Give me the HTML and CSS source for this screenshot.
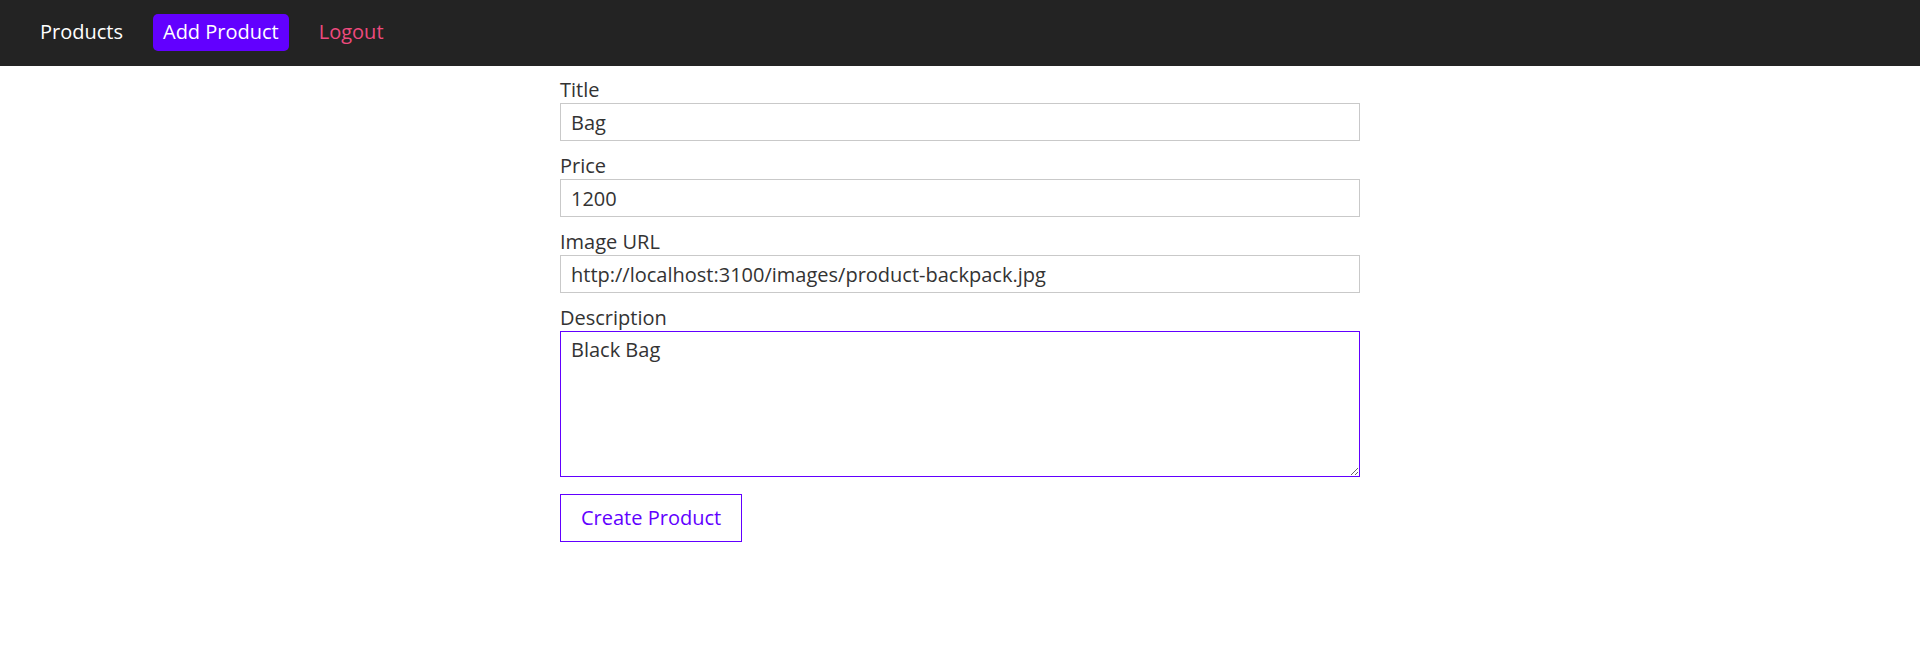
FILE: index.html
```
<!DOCTYPE html>
<html lang="en">
<head>
<meta charset="utf-8">
<title>Add Product</title>
<link rel="stylesheet" href="styles.css">
</head>
<body>
<header class="main-header">
  <nav class="main-nav">
    <ul class="nav-list">
      <li class="nav-item"><a class="nav-link" href="#">Products</a></li>
      <li class="nav-item"><a class="nav-link nav-link--active" href="#">Add Product</a></li>
      <li class="nav-item"><a class="nav-link nav-link--logout" href="#">Logout</a></li>
    </ul>
  </nav>
</header>
<main class="content">
  <form class="product-form">
    <div class="form-control">
      <label class="form-label" for="title">Title</label>
      <input class="form-input" type="text" id="title" value="Bag">
    </div>
    <div class="form-control">
      <label class="form-label" for="price">Price</label>
      <input class="form-input" type="text" id="price" value="1200">
    </div>
    <div class="form-control">
      <label class="form-label" for="imageUrl">Image URL</label>
      <input class="form-input" type="text" id="imageUrl" value="http://localhost:3100/images/product-backpack.jpg">
    </div>
    <div class="form-control">
      <label class="form-label" for="description">Description</label>
      <textarea class="form-input form-textarea form-textarea--focused" id="description">Black Bag</textarea>
    </div>
    <button class="btn" type="button">Create Product</button>
  </form>
</main>
</body>
</html>
```
FILE: styles.css
```
* {
  box-sizing: border-box;
}

html, body {
  margin: 0;
  padding: 0;
}

body {
  font-family: "Open Sans", "Noto Sans", sans-serif;
  font-size: 20px;
  line-height: 26px;
  color: #333;
  background: #fff;
}

.main-header {
  height: 66px;
  background: #232323;
  display: flex;
  align-items: center;
  padding: 0 30px 2px;
}

.nav-list {
  list-style: none;
  margin: 0;
  padding: 0;
  display: flex;
  align-items: center;
  gap: 20px;
}

.nav-link {
  display: block;
  padding: 5px 10px 6px;
  text-decoration: none;
  color: #fff;
  border-radius: 5px;
}

.nav-link--active {
  background: #6200ff;
  color: #fff;
}

.nav-link--logout {
  color: #ee4a7e;
}

.content {
  display: flex;
  justify-content: center;
}

.product-form {
  width: 800px;
  padding-top: 11px;
  display: flex;
  flex-direction: column;
  gap: 12px;
}

.form-control {
  display: flex;
  flex-direction: column;
}

.form-label {
  display: block;
  line-height: 26px;
}

.form-input {
  display: block;
  width: 100%;
  height: 38px;
  margin: 0;
  padding: 0 10px;
  border: 1px solid #c9c9c9;
  border-radius: 0;
  font: inherit;
  line-height: 26px;
  color: #333;
  background: #fff;
  outline: none;
}

.form-textarea {
  height: 146px;
  padding: 5px 10px;
  resize: vertical;
}

.form-textarea--focused {
  border-color: #6200ff;
}

.btn {
  align-self: flex-start;
  margin-top: 5px;
  height: 48px;
  padding: 0 20px;
  font: inherit;
  line-height: 26px;
  color: #6200ff;
  background: #fff;
  border: 1px solid #6200ff;
  border-radius: 0;
  cursor: pointer;
}
```
